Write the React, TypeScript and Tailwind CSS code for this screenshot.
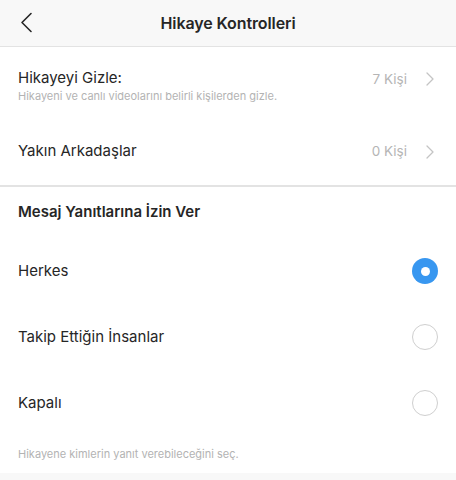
import React, { useState } from "react";

const options = ["Herkes", "Takip Ettiğin İnsanlar", "Kapalı"];

function Chevron({ className }: { className?: string }) {
  return (
    <svg width="8" height="14" viewBox="0 0 8 14" fill="none" className={className}>
      <path d="M1 1l6 6-6 6" stroke="currentColor" strokeWidth="1.3" strokeLinecap="round" strokeLinejoin="round" />
    </svg>
  );
}

function Radio({ checked }: { checked: boolean }) {
  if (checked) {
    return (
      <div className="w-[26px] h-[26px] rounded-full bg-[#3897f0] flex items-center justify-center">
        <div className="w-[9px] h-[9px] rounded-full bg-white" />
      </div>
    );
  }
  return <div className="w-[26px] h-[26px] rounded-full border-[1.5px] border-[#cfcfcf]" />;
}

export default function App() {
  const [selected, setSelected] = useState(0);

  return (
    <div className="w-[456px] h-[480px] bg-white flex flex-col text-[#262626] font-['Inter','Noto_Sans',sans-serif] overflow-hidden">
      <header className="h-[47px] shrink-0 bg-[#f8f8f8] border-b border-[#e3e3e3] flex items-center relative">
        <button className="absolute left-[18px] top-[10px] p-[2px] text-[#262626]" aria-label="back">
          <svg width="13" height="21" viewBox="0 0 13 21" fill="none">
            <path d="M11 1.5L2 10.5l9 9" stroke="currentColor" strokeWidth="1.6" strokeLinecap="round" strokeLinejoin="round" />
          </svg>
        </button>
        <h1 className="flex-1 text-center text-[16px] font-semibold tracking-[-0.1px]">Hikaye Kontrolleri</h1>
      </header>

      <div className="h-[71px] shrink-0 px-[18px] pt-[21px] flex items-start">
        <div className="flex-1">
          <div className="text-[15px] leading-[20px]">Hikayeyi Gizle:</div>
          <div className="text-[11px] leading-[14px] mt-[1px] text-[#b3b3b3]">
            Hikayeni ve canlı videolarını belirli kişilerden gizle.
          </div>
        </div>
        <div className="flex items-center gap-[19px] text-[#b5b5b5] mt-[2px] pr-[4px]">
          <span className="text-[13.5px] leading-[18px]">7 Kişi</span>
          <Chevron className="text-[#c4c4c4]" />
        </div>
      </div>

      <div className="h-[67px] shrink-0 px-[18px] flex items-center">
        <div className="flex-1 text-[15px]">Yakın Arkadaşlar</div>
        <div className="flex items-center gap-[19px] text-[#b5b5b5] pr-[4px]">
          <span className="text-[13.5px]">0 Kişi</span>
          <Chevron className="text-[#c4c4c4]" />
        </div>
      </div>

      <div className="h-[2px] shrink-0 bg-[#e3e3e3]" />

      <div className="h-[51px] shrink-0 px-[18px] flex items-center">
        <span className="text-[15px] font-semibold">Mesaj Yanıtlarına İzin Ver</span>
      </div>

      {options.map((o, i) => (
        <button
          key={o}
          onClick={() => setSelected(i)}
          className="h-[66px] shrink-0 px-[18px] pr-[18px] flex items-center text-left"
        >
          <span className="flex-1 text-[15px]">{o}</span>
          <Radio checked={selected === i} />
        </button>
      ))}

      <div className="h-[37px] shrink-0 px-[18px] flex items-center">
        <span className="text-[11px] text-[#b3b3b3]">Hikayene kimlerin yanıt verebileceğini seç.</span>
      </div>

      <div className="flex-1 bg-[#f8f8f8]" />
    </div>
  );
}
